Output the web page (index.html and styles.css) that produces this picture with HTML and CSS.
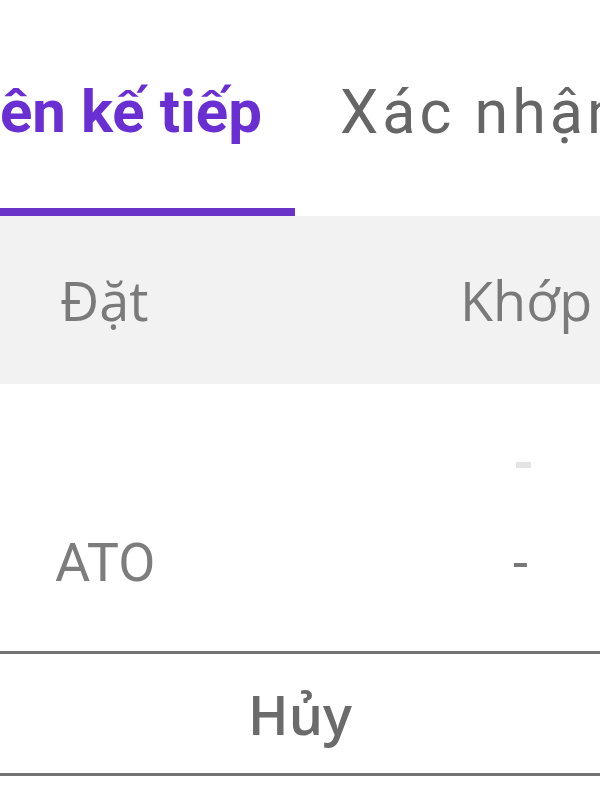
FILE: index.html
```html
<!DOCTYPE html>
<html lang="vi">
<head>
  <meta charset="UTF-8" />
  <meta name="viewport" content="width=device-width, initial-scale=1.0" />
  <title>Lệnh phiên kế tiếp</title>
  <link rel="stylesheet" href="styles.css">
</head>
<body>

  <nav class="tabs">
    <div class="tab tab-active"><span>Phiên kế tiếp</span></div>
    <div class="tab"><span>Xác nhận</span></div>
  </nav>

  <section class="order-table">
    <div class="table-head">
      <div class="col-main">Đặt</div>
      <div class="col-side">Khớp</div>
    </div>
    <div class="table-row">
      <div class="col-main cell-type">ATO</div>
      <div class="col-side cell-values">
        <span class="dash dash-faint">-</span>
        <span class="dash">-</span>
      </div>
    </div>
  </section>

  <div class="actions">
    <button class="btn-cancel">Hủy</button>
  </div>

</body>
</html>
```

FILE: styles.css
```css
/* Reset */
* {
  margin: 0;
  padding: 0;
  box-sizing: border-box;
}

body {
  width: 600px;
  height: 800px;
  overflow: hidden;
  background: #fff;
  font-family: 'Open Sans', 'Noto Sans', sans-serif;
  color: #7a7a7a;
}

/* Tabs */
.tabs {
  display: flex;
  height: 216px;
  white-space: nowrap;
}

.tab {
  display: flex;
  align-items: flex-start;
  padding-top: 78px;
  font-family: Roboto, 'Liberation Sans', sans-serif;
  font-size: 61px;
  line-height: 68px;
  letter-spacing: 4px;
  color: #666;
}

.tab-active {
  flex: 0 0 295px;
  min-width: 0;
  justify-content: flex-end;
  padding-right: 33px;
  border-bottom: 8px solid #6b34c9;
  font-size: 60px;
  letter-spacing: 0;
  color: #6a2fd2;
  font-weight: 700;
}

.tab:not(.tab-active) {
  flex: 0 0 auto;
  padding-left: 45px;
}

/* Table */
.table-head {
  display: grid;
  grid-template-columns: 400px 1fr;
  align-items: center;
  height: 168px;
  padding-left: 60px;
  background: #f2f2f2;
  font-size: 54px;
  color: #7a7a7a;
}

.table-row {
  display: grid;
  grid-template-columns: 400px 1fr;
  align-items: end;
  height: 267px;
  padding: 0 0 58px 55px;
}

.cell-type {
  font-family: Roboto, 'Liberation Sans', sans-serif;
  font-size: 54px;
  line-height: 60px;
  color: #7d7d7d;
}

.cell-values {
  display: flex;
  flex-direction: column;
  padding-left: 58px;
  font-family: Roboto, 'Liberation Sans', sans-serif;
  font-size: 54px;
  line-height: 60px;
}

.dash {
  color: #777;
}

.dash-faint {
  margin-bottom: 40px;
  font-weight: 700;
  color: #e3e3e3;
}

/* Cancel button */
.actions {
  border-top: 3px solid #727272;
  border-bottom: 3px solid #727272;
}

.btn-cancel {
  display: block;
  width: 100%;
  height: 119px;
  border: none;
  background: #fff;
  font-family: 'Open Sans', 'Noto Sans', sans-serif;
  font-size: 54px;
  font-weight: 600;
  color: #6b6b6b;
}
```
